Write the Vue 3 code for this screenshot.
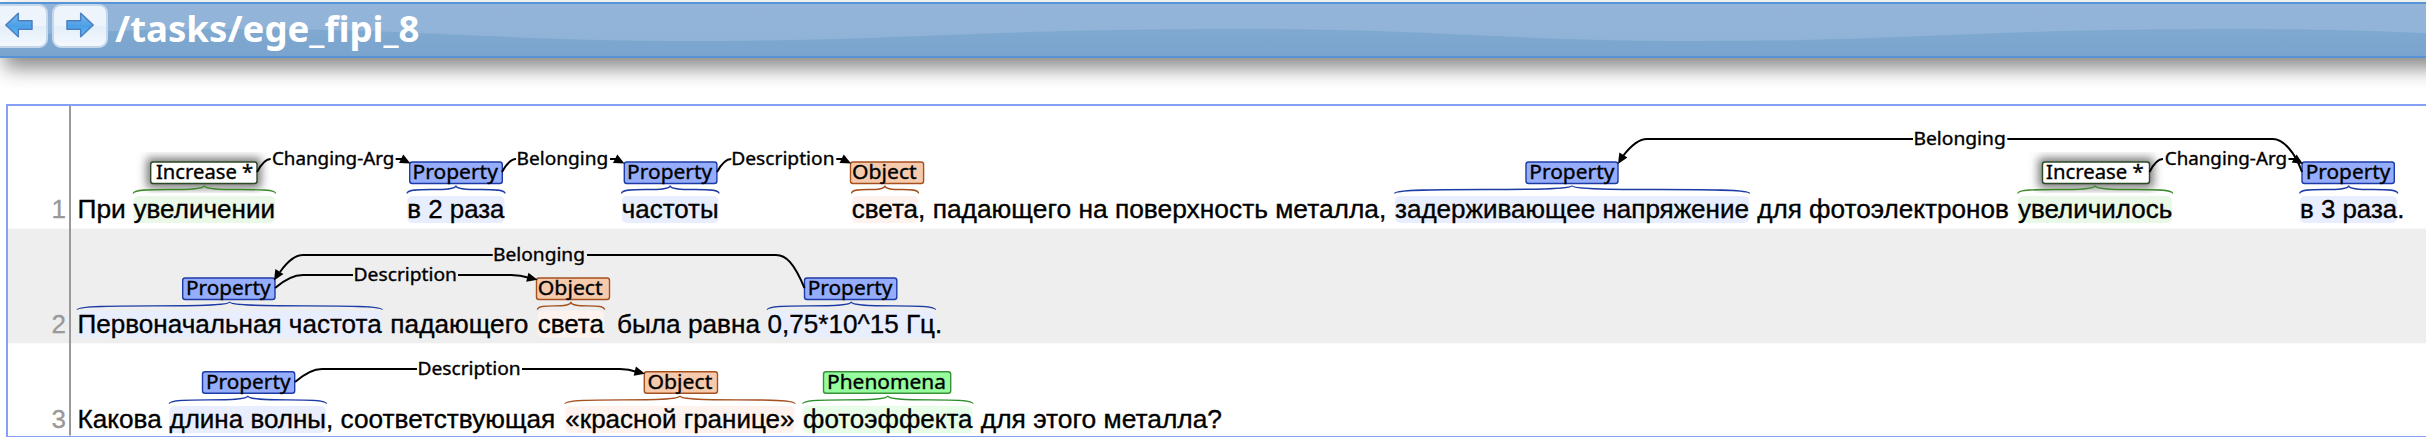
<script setup>
const rows = [
  {
    n: 1, base: 218, tagY: 162, tagBase: 179, box: 196, tip: 185.5,
    plain: [
      [77.5, 'При', 48.3],
      [918, ', падающего на поверхность металла,', 468.3],
      [1757.2, 'для фотоэлектронов', 251.6],
      [2397.2, '.', 7.2],
    ],
    spans: [
      { x: 133.5, r: 275, text: 'увеличении', kind: 'inc', tx: 150.7, tr: 257, label: 'Increase *', lx: 156, lr: 253.2 },
      { x: 407.3, r: 504.5, text: 'в 2 раза', kind: 'prop', tx: 409.7, tr: 502.3, label: 'Property', lx: 412.6, lr: 497.9 },
      { x: 621.8, r: 718.5, text: 'частоты', kind: 'prop', tx: 624.3, tr: 716.9, label: 'Property', lx: 627.1, lr: 712.2 },
      { x: 851.8, r: 918, text: 'света', kind: 'obj', tx: 850.5, tr: 923.6, label: 'Object', lx: 852, lr: 916.7 },
      { x: 1395, r: 1749, text: 'задерживающее напряжение', kind: 'prop', tx: 1526, tr: 1618, label: 'Property', lx: 1529.3, lr: 1614.4 },
      { x: 2018, r: 2172.2, text: 'увеличилось', kind: 'inc', tx: 2042.5, tr: 2149.5, label: 'Increase *', lx: 2046, lr: 2143.7 },
      { x: 2300, r: 2397.2, text: 'в 3 раза', kind: 'prop', tx: 2302, tr: 2394.3, label: 'Property', lx: 2305.7, lr: 2390.4 },
    ],
  },
  {
    n: 2, base: 332.9, tagY: 278, tagBase: 295, box: 310.5, tip: 301.8,
    plain: [
      [390.3, 'падающего', 138],
      [617, 'была равна', 143],
      [935, '.', 7.2],
    ],
    spans: [
      { x: 77.5, r: 381.7, text: 'Первоначальная частота', kind: 'prop', tx: 182.7, tr: 275, label: 'Property', lx: 186, lr: 270.5 },
      { x: 537.7, r: 604, text: 'света', kind: 'obj', tx: 536.5, tr: 609.5, label: 'Object', lx: 537.8, lr: 602.7 },
      { x: 767.5, r: 935, text: '0,75*10^15 Гц', kind: 'prop', tx: 804.5, tr: 896.8, label: 'Property', lx: 807.7, lr: 892.5 },
    ],
  },
  {
    n: 3, base: 428, tagY: 371.8, tagBase: 388.8, box: 406, tip: 395.8,
    plain: [
      [77.5, 'Какова', 84.3],
      [326, ', соответствующая', 229.3],
      [980.8, 'для этого металла?', 241.2],
    ],
    spans: [
      { x: 169.5, r: 326, text: 'длина волны', kind: 'prop', tx: 202.5, tr: 294.7, label: 'Property', lx: 206, lr: 290.5 },
      { x: 565.3, r: 794.5, text: '«красной границе»', kind: 'obj', tx: 644.3, tr: 717.5, label: 'Object', lx: 647.5, lr: 712.3 },
      { x: 803, r: 972.5, text: 'фотоэффекта', kind: 'phen', tx: 823.5, tr: 950.7, label: 'Phenomena', lx: 827, lr: 946 },
    ],
  },
]

const arcs = [
  { d: 'M257 172Q264 159 270.7 159M395.7 159H404', head: [410.5, 163.5, 27], label: 'Changing-Arg', x: 272, r: 394.3, y: 165.3 },
  { d: 'M502 172Q509 159 516 159M610 159H618', head: [624.5, 163.5, 27], label: 'Belonging', x: 516.6, r: 608.3, y: 165.3 },
  { d: 'M717 172Q724 159 731.3 159M836.3 159H845', head: [851, 163.5, 27], label: 'Description', x: 731.2, r: 834.6, y: 165.3 },
  { d: 'M1623 156Q1636 139 1647 139H1913M2007.3 139H2273C2283 139 2295 152 2302 172', head: [1618, 164, 121], label: 'Belonging', x: 1913.5, r: 2005.8, y: 145.3 },
  { d: 'M2149.5 172Q2156 159 2163 159M2288.5 159H2296', head: [2303, 164, 32], label: 'Changing-Arg', x: 2164.8, r: 2287, y: 165.3 },
  { d: 'M280 272Q292 255 303 255H492.7M587 255H776C786 255 794 263 804.5 288', head: [274, 280.5, 121], label: 'Belonging', x: 493, r: 585, y: 261.3 },
  { d: 'M275 288Q290 275 303 275H353M458 275H511Q520 275 530 278', head: [537.5, 279.8, 14], label: 'Description', x: 353.6, r: 457, y: 281.3 },
  { d: 'M295 382Q310 369 322 369H417M522 369H620Q629 369 637 372', head: [645, 373.7, 14], label: 'Description', x: 417.4, r: 520.7, y: 375.3 },
]

const glow = rows[0].spans.filter((s) => s.kind === 'inc')

function brace(s, tip) {
  const l = s.x - 0.3
  const r = s.r + 0.6
  const c = (s.x + s.r) / 2
  const b = tip + 8
  return `M${l} ${b}C${l} ${tip} ${c} ${b} ${c} ${tip}C${c} ${b} ${r} ${tip} ${r} ${b}`
}
</script>

<template>
  <div class="page">
    <header class="bar">
      <svg class="wave" width="2446" height="52" viewBox="-6 4 2446 52">
        <defs>
          <linearGradient id="deep" x1="0" y1="0" x2="0" y2="1">
            <stop offset="0" stop-color="#80a9d0" />
            <stop offset="1" stop-color="#7aa4ce" />
          </linearGradient>
        </defs>
        <path
          d="M-6 36C80 32 140 29 235 29C430 29 500 41 690 41C900 41 980 29 1238 29C1440 29 1500 41 1702 41C1900 41 1980 29 2235 29C2330 29 2380 31 2440 34V56H-6Z"
          fill="url(#deep)"
        />
      </svg>
      <nav class="nav">
        <button class="btn first" aria-label="Previous">
          <svg width="30" height="28" viewBox="-1 -1 30 28">
            <defs>
              <linearGradient id="arrow" x1="0" y1="0" x2="0" y2="1">
                <stop offset="0" stop-color="#7db7ec" />
                <stop offset=".55" stop-color="#4a9fe6" />
                <stop offset="1" stop-color="#5cc0fa" />
              </linearGradient>
            </defs>
            <path class="arrow" d="M.8 13L13.3 1.2V8.7H27V17.3H13.3V24.8Z" fill="url(#arrow)" />
          </svg>
        </button>
        <button class="btn" aria-label="Next">
          <svg width="30" height="28" viewBox="-1 -1 30 28">
            <path class="arrow" d="M27.2 13L14.7 1.2V8.7H1V17.3H14.7V24.8Z" fill="url(#arrow)" />
          </svg>
        </button>
      </nav>
      <svg class="title" width="320" height="52" viewBox="110 4 320 52">
        <text x="115" y="42" textLength="304.5" lengthAdjust="spacingAndGlyphs">/tasks/ege_fipi_8</text>
      </svg>
    </header>

    <main class="doc">
      <svg width="2418" height="330" viewBox="8 106 2418 330">
        <defs>
          <filter id="blur" x="-30%" y="-60%" width="160%" height="220%">
            <feGaussianBlur stdDeviation="5" />
          </filter>
          <clipPath id="glowclip"><rect x="0" y="152" width="2426" height="41" /></clipPath>
        </defs>
        <rect class="stripe" x="8" y="228.7" width="2418" height="114.6" />
        <rect x="69" y="106" width="2" height="329.5" fill="#999" />

        <g clip-path="url(#glowclip)">
          <rect
            v-for="g in glow" :key="g.x" :x="g.tx - 4" y="158" :width="g.tr - g.tx + 8" height="30"
            fill="#777" filter="url(#blur)"
          />
        </g>

        <g v-for="row in rows" :key="row.n">
          <text class="num" x="66" :y="row.base">{{ row.n }}</text>
          <g v-for="s in row.spans" :key="s.x" :class="s.kind">
            <rect class="hl" :x="s.x" :y="row.box" :width="s.r - s.x" height="27" rx="5" />
            <path class="brace" :d="brace(s, row.tip)" />
            <rect class="tag" :x="s.tx" :y="row.tagY" :width="s.tr - s.tx" height="21.5" rx="2.5" />
            <text class="label" :x="s.lx" :y="row.tagBase" :textLength="s.lr - s.lx" lengthAdjust="spacingAndGlyphs">{{ s.label }}</text>
            <text class="body" :x="s.x" :y="row.base" :textLength="s.r - s.x" lengthAdjust="spacingAndGlyphs">{{ s.text }}</text>
          </g>
          <text
            v-for="p in row.plain" :key="p[0]" class="body" :x="p[0]" :y="row.base"
            :textLength="p[2]" lengthAdjust="spacingAndGlyphs"
          >{{ p[1] }}</text>
        </g>

        <g v-for="(a, i) in arcs" :key="i">
          <path class="arc" :d="a.d" />
          <path d="M0 0L-10.5 -4.7V4.7Z" :transform="`translate(${a.head[0]} ${a.head[1]}) rotate(${a.head[2]})`" />
          <text class="arc-label" :x="a.x" :y="a.y" :textLength="a.r - a.x" lengthAdjust="spacingAndGlyphs">{{ a.label }}</text>
        </g>
      </svg>
    </main>
  </div>
</template>

<style>
body {
  background: #fff;
  overflow: hidden;
}
</style>

<style scoped>
.page {
  width: 2426px;
  height: 448px;
  overflow: hidden;
  padding-top: 2px;
  box-sizing: border-box;
}
.bar {
  position: relative;
  display: flex;
  box-sizing: border-box;
  width: 2446px;
  height: 56px;
  margin-left: -6px;
  border-top: 2px solid #5694d6;
  border-bottom: 2px solid #5694d6;
  background: linear-gradient(#94b5d9, #8db2d6);
  box-shadow: 10px 10px 20px #888;
}
.wave {
  position: absolute;
  left: 0;
  top: 0;
}
.nav {
  position: relative;
  display: flex;
  gap: 4px;
  margin-left: -2px;
}
.btn {
  box-sizing: border-box;
  width: 56px;
  height: 44px;
  padding: 0 0 2px;
  border: 2px solid #c5d8eb;
  border-radius: 9px;
  background: linear-gradient(#edf4fc 0 50%, #e3eefa 51%, #f3f8fd);
  display: flex;
  align-items: center;
  justify-content: center;
}
.btn.first {
  padding-right: 2px;
}
.arrow {
  stroke: #4b7fc0;
  stroke-width: 1.5;
  stroke-linejoin: round;
}
.title {
  position: relative;
  margin-left: 2px;
}
.title text {
  font: 700 35px "Noto Sans", "Open Sans", sans-serif;
  fill: #fff;
}
.doc {
  margin: 46px 0 0 6px;
  border: solid #86a0f7;
  border-width: 2px 0 1px 2px;
  width: 2418px;
  height: 330px;
}
.doc svg {
  display: block;
}
.stripe {
  fill: #eee;
}
.body,
.num {
  font: 26px "Liberation Sans", Arial, sans-serif;
}
.body {
  stroke: #000;
  stroke-width: 0.35;
}
.num {
  fill: #999;
  stroke: #999;
  stroke-width: 0.3;
  text-anchor: end;
}
.label {
  font: 20px "Noto Sans", sans-serif;
  stroke: #000;
  stroke-width: 0.35;
}
.arc-label {
  font: 17.5px "Noto Sans", sans-serif;
  stroke: #000;
  stroke-width: 0.35;
}
.arc {
  fill: none;
  stroke: #000;
  stroke-width: 2;
}
.brace {
  fill: none;
  stroke-width: 1.3;
}
.tag {
  stroke-width: 1.4;
}
.prop .tag { fill: #95adfb; stroke: #1c3ba5; }
.prop .brace { stroke: #1c3ba5; }
.prop .hl { fill: #e9eefe; }
.obj .tag { fill: #f6cbad; stroke: #a5501f; }
.obj .brace { stroke: #a5501f; }
.obj .hl { fill: #fdf2ed; }
.phen .tag { fill: #96fc9e; stroke: #3a8f3a; }
.phen .brace { stroke: #2f8f2f; }
.phen .hl { fill: #e7fde8; }
.inc .tag { fill: #fff; stroke: #2c4a26; }
.inc .brace { stroke: #3d8a2c; }
.inc .hl { fill: #eaf9e7; }
</style>
